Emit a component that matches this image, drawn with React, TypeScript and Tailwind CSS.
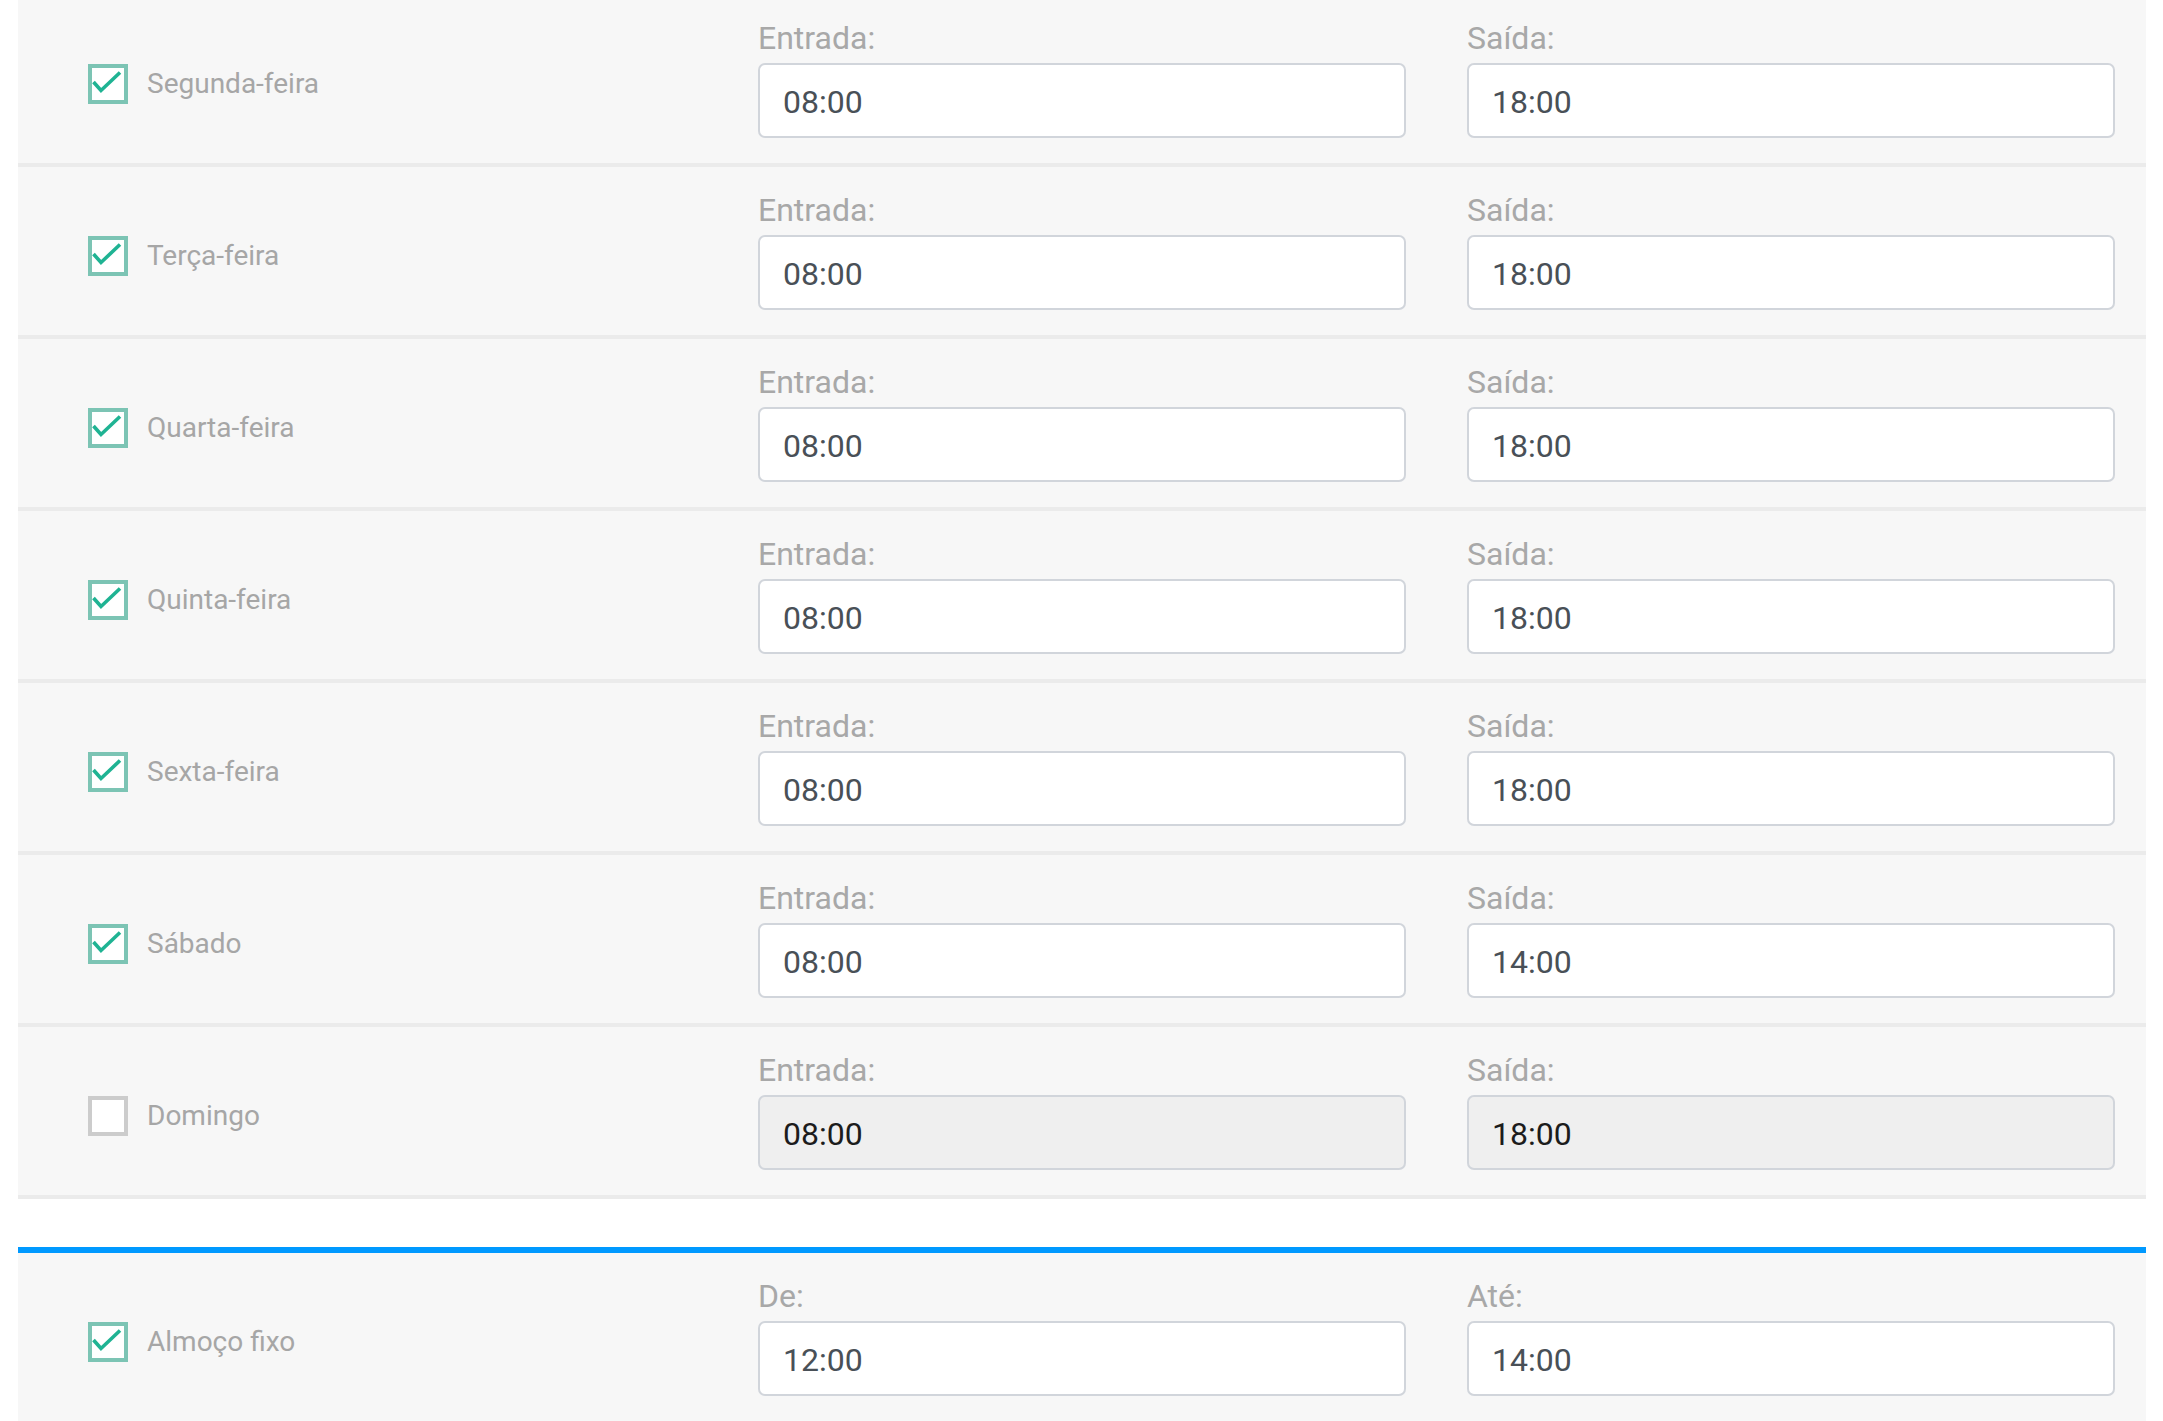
import React from "react";

type Day = {
  name: string;
  enabled: boolean;
  from: string;
  to: string;
};

const days: Day[] = [
  { name: "Segunda-feira", enabled: true, from: "08:00", to: "18:00" },
  { name: "Terça-feira", enabled: true, from: "08:00", to: "18:00" },
  { name: "Quarta-feira", enabled: true, from: "08:00", to: "18:00" },
  { name: "Quinta-feira", enabled: true, from: "08:00", to: "18:00" },
  { name: "Sexta-feira", enabled: true, from: "08:00", to: "18:00" },
  { name: "Sábado", enabled: true, from: "08:00", to: "14:00" },
  { name: "Domingo", enabled: false, from: "08:00", to: "18:00" },
];

export default function App() {
  return (
    <div
      className="min-h-screen bg-white pl-[18px] pr-[17px] overflow-hidden"
      style={{ fontFamily: "Roboto, 'Liberation Sans', sans-serif" }}
    >
      {/* Horário semanal */}
      <div className="-mt-[5px]">
        {days.map((d) => (
          <ScheduleRow
            key={d.name}
            label={d.name}
            checked={d.enabled}
            firstLabel="Entrada:"
            secondLabel="Saída:"
            first={d.from}
            second={d.to}
            bordered
          />
        ))}
      </div>

      {/* Almoço */}
      <div className="mt-[48px] border-t-[6px] border-[#0099ff]">
        <ScheduleRow
          label="Almoço fixo"
          checked
          firstLabel="De:"
          secondLabel="Até:"
          first="12:00"
          second="14:00"
        />
      </div>
    </div>
  );
}

function ScheduleRow({
  label,
  checked,
  firstLabel,
  secondLabel,
  first,
  second,
  bordered,
}: {
  label: string;
  checked: boolean;
  firstLabel: string;
  secondLabel: string;
  first: string;
  second: string;
  bordered?: boolean;
}) {
  return (
    <div
      className={`grid grid-cols-[1fr_648px_648px] gap-x-[61px] bg-[#f7f7f7] pl-[70px] pr-[31px] ${
        bordered ? "border-b-4 border-[#ebebeb]" : ""
      }`}
    >
      <div className="flex items-center gap-[19px] pt-[9px]">
        <CheckBox checked={checked} />
        <span className="text-[28px] leading-[34px] text-[#a6a6a6] pt-[1px]">{label}</span>
      </div>
      <TimeField label={firstLabel} value={first} disabled={!checked} />
      <TimeField label={secondLabel} value={second} disabled={!checked} />
    </div>
  );
}

function TimeField({
  label,
  value,
  disabled,
}: {
  label: string;
  value: string;
  disabled?: boolean;
}) {
  return (
    <div className="flex flex-col pt-[24px] pb-[25px]">
      <label className="text-[32px] leading-[38px] text-[#a8a8a8] mb-[6px]">{label}</label>
      <input
        type="text"
        readOnly
        disabled={disabled}
        value={value}
        className={`h-[75px] w-full rounded-[7px] border-2 border-[#d1d5db] pl-[23px] pt-[2px] text-[32px] outline-none ${
          disabled ? "bg-[#efefef] text-[#1c1c1c]" : "bg-white text-[#495057]"
        }`}
        style={{ fontFamily: "Roboto, 'Liberation Sans', sans-serif" }}
      />
    </div>
  );
}

function CheckBox({ checked }: { checked: boolean }) {
  return (
    <div
      className={`h-[40px] w-[40px] shrink-0 border-4 bg-white ${
        checked ? "border-[#7cc4b4]" : "border-[#cccccc]"
      }`}
    >
      {checked && (
        <svg width="32" height="32" viewBox="0 0 32 32" fill="none">
          <path
            d="M1.5 14 L9 22.5 L28 4.5"
            stroke="#1fb393"
            strokeWidth="3.6"
            strokeLinejoin="miter"
          />
        </svg>
      )}
    </div>
  );
}
